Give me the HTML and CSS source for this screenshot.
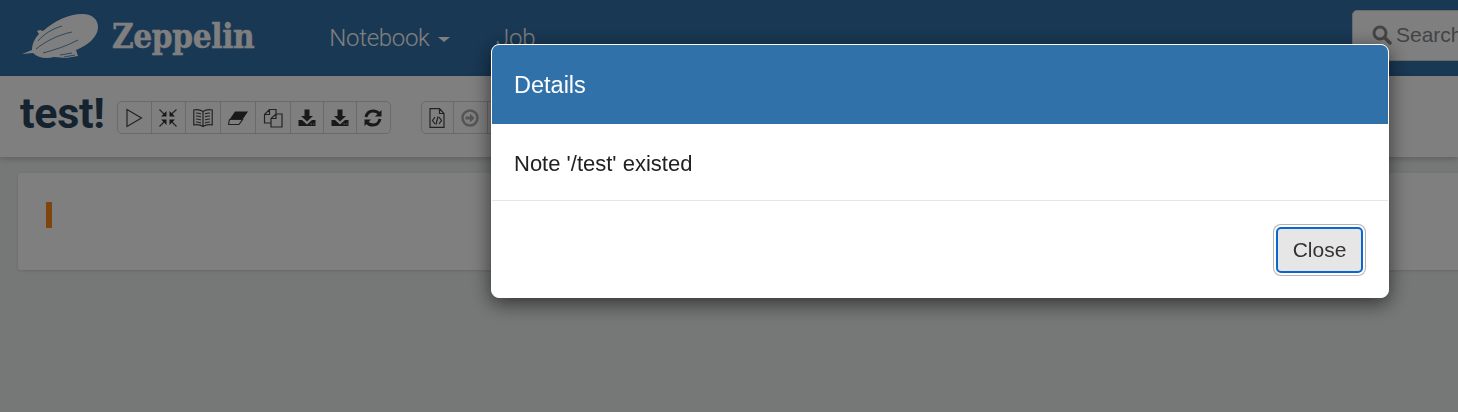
FILE: index.html
```html
<!DOCTYPE html>
<html lang="en">
<head>
  <meta charset="UTF-8">
  <title>Zeppelin</title>
  <link rel="stylesheet" href="styles.css">
</head>
<body>
  <nav class="navbar">
    <a class="brand">
      <svg class="brand-logo" viewBox="0 0 78 48" width="78" height="48">
        <path class="blimp" d="M0 42 L10 38 C10 32 13 26 17 22 L15 19 L18 18 L21 19 C32 9 47 2 60 2 C71 2 76 8 76 15 C76 25 66 33 54 38 L56 44 L44 46 L32 45 C24 47 16 46 11 41 Z"/>
        <path class="blimp-line" d="M16 29 C22 22 30 17 40 14 M14 37 C24 29 36 23 50 20 M21 41 C32 38 45 34 56 28"/>
        <path class="blimp-line" d="M38 43 L50 41 M42 45 L53 43"/>
      </svg>
      <span class="brand-name">Zeppelin</span>
    </a>
    <ul class="nav-links">
      <li>Notebook <span class="caret"></span></li>
      <li class="job">Job</li>
    </ul>
    <div class="search">
      <svg viewBox="0 0 20 20" width="20" height="20">
        <circle cx="8" cy="8" r="6" fill="none" stroke="#8a8a8a" stroke-width="3"/>
        <path d="M12.5 12.5 L18 18" stroke="#8a8a8a" stroke-width="3.5" stroke-linecap="round"/>
      </svg>
      <span>Search</span>
    </div>
  </nav>

  <header class="note-bar">
    <h1 class="note-title">test!</h1>
    <div class="btn-group">
      <button class="tool"><svg viewBox="0 0 20 20"><path class="line" d="M3 1.500 L17.500 10 L3 18.500 Z"/></svg></button>
      <button class="tool w34"><svg viewBox="0 0 20 20"><path class="line" d="M1.500 1.500 L7 7 M12.500 7 L18.500 1.500 M1.500 18.500 L7 13 M18.500 18.500 L13 13"/><path class="solid" d="M8.500 8.500 H3 L8.500 3 Z M11.500 8.500 H17 L11.500 3 Z M8.500 11.500 H3 L8.500 17 Z M11.500 11.500 H17 L11.500 17 Z"/></svg></button>
      <button class="tool"><svg viewBox="0 0 20 20"><path class="line" d="M.8 2 C4 1.200 7.500 1.800 10 3.500 C12.500 1.800 16 1.200 19.200 2 V17 C16 16.200 12.500 16.800 10 18.500 C7.500 16.800 4 16.200 .8 17 Z M10 3.500 V18.500 M3 5 C5 5 7 5.500 8 6 M3 8 C5 8 7 8.500 8 9 M3 11 C5 11 7 11.500 8 12 M3 14 C5 14 7 14.500 8 15 M17 5 C15 5 13 5.500 12 6 M17 8 C15 8 13 8.500 12 9 M17 11 C15 11 13 11.500 12 12 M17 14 C15 14 13 14.500 12 15"/></svg></button>
      <button class="tool"><svg viewBox="0 0 20 20"><path class="solid" d="M7 3.500 H20 L14.500 11.500 H1.500 Z"/><path class="line" d="M1.500 11.500 H14.500 L11 16.500 H.5 Z"/></svg></button>
      <button class="tool"><svg viewBox="0 0 20 20"><path class="line" d="M6.500 1.500 H13 V6 M6.500 1.500 L1.500 6.500 V15 H8 M6.500 1.500 V6.500 H1.500 M13 6 H19 V19 H8 V10.500 Z M13 6 V10.500 H8"/></svg></button>
      <button class="tool w33"><svg viewBox="0 0 20 20"><path class="solid" d="M7.500 1.500 H12.500 V8 H16 L10 13.500 L4 8 H7.500 Z M1.500 12 H5 L10 16.500 L15 12 H18.500 V18 H1.500 Z"/><path class="dots" d="M13.500 15.500 H15 V16.500 H13.500 Z M16 15.500 H17.500 V16.500 H16 Z"/></svg></button>
      <button class="tool w33"><svg viewBox="0 0 20 20"><path class="solid" d="M7.500 1.500 H12.500 V8 H16 L10 13.500 L4 8 H7.500 Z M1.500 12 H5 L10 16.500 L15 12 H18.500 V18 H1.500 Z"/><path class="dots" d="M13.500 15.500 H15 V16.500 H13.500 Z M16 15.500 H17.500 V16.500 H16 Z"/></svg></button>
      <button class="tool w33"><svg viewBox="0 0 20 20"><path class="sync" d="M3 9 C4 5 7 3 10 3 C13 3 15 4 16.500 6 M17 11 C16 15 13 17 10 17 C7 17 5 16 3.500 14"/><path class="solid" d="M18.500 2 V8.500 H12 Z M1.500 18 V11.500 H8 Z"/></svg></button>
    </div>
    <div class="btn-group second">
      <button class="tool w32"><svg viewBox="0 0 20 20"><path class="line" d="M3 .7 H12.500 L17 5.500 V19.300 H3 Z M12.500 .7 V5.500 H17 M8 9 L5.500 12.500 L8 16 M12 9 L14.500 12.500 L12 16 M11 8.500 L9 16.500"/></svg></button>
      <button class="tool w34"><svg viewBox="0 0 20 20"><circle class="thick" cx="10" cy="10" r="7.500"/><path class="arrow" d="M5.500 8.500 H10 V5.500 L14.500 10 L10 14.500 V11.500 H5.500 Z"/></svg></button>
      <button class="tool"></button>
    </div>
  </header>

  <main class="content">
    <section class="paragraph">
      <span class="cursor"></span>
    </section>
  </main>

  <div class="backdrop"></div>

  <div class="modal">
    <div class="modal-header">Details</div>
    <div class="modal-body">Note '/test' existed</div>
    <div class="modal-footer">
      <button class="btn-close">Close</button>
    </div>
  </div>
</body>
</html>
```

FILE: styles.css
```css
html, body {
  height: 100%;
  overflow: hidden;
}

body {
  margin: 0;
  background: #ecf0ee;
  font-family: "Liberation Sans", Arial, sans-serif;
}

.navbar {
  display: flex;
  align-items: flex-start;
  height: 76px;
  background: #3371a9;
  color: #fff;
}

.brand {
  display: flex;
  align-items: center;
  margin: 12px 0 0 22px;
}

.brand-logo {
  display: block;
}

.blimp {
  fill: #fff;
}

.blimp-line {
  fill: none;
  stroke: #3371a9;
  stroke-width: .8;
}

.brand-name {
  margin: 1px 0 0 12px;
  font-family: "DejaVu Serif Condensed", "DejaVu Serif", serif;
  font-size: 33px;
  font-weight: 700;
  letter-spacing: -.35px;
  -webkit-text-stroke: .4px #fff;
}

.nav-links {
  display: flex;
  gap: 46px;
  margin: 23px 0 0 75px;
  padding: 0;
  list-style: none;
  font-family: Roboto, sans-serif;
  font-size: 24px;
  font-weight: 300;
  letter-spacing: -.3px;
  line-height: 30px;
}

.caret {
  display: inline-block;
  width: 0;
  height: 0;
  margin-left: 3px;
  vertical-align: middle;
  border-top: 5px solid #fff;
  border-left: 6px solid transparent;
  border-right: 6px solid transparent;
}

.search {
  display: flex;
  align-items: center;
  gap: 4px;
  flex: none;
  box-sizing: border-box;
  width: 200px;
  height: 51px;
  margin: 10px -94px 0 auto;
  padding: 0 0 2px 19px;
  background: #fff;
  border: 1px solid #d6d6d6;
  border-radius: 5px;
  color: #888;
  font-size: 21px;
}

.note-bar {
  display: flex;
  align-items: flex-start;
  box-sizing: border-box;
  height: 81px;
  padding: 25px 0 0 20px;
  background: #fff;
  box-shadow: 0 2px 6px rgba(0, 0, 0, .2);
  position: relative;
}

.note-title {
  margin: -10px 12px 0 0;
  color: #2b4560;
  font-family: Roboto, sans-serif;
  font-size: 43px;
  font-weight: 700;
  line-height: 44px;
  letter-spacing: -.3px;
}

.btn-group {
  display: flex;
  box-sizing: border-box;
  height: 33px;
  border: 1px solid #d4d4d4;
  border-radius: 5px;
}

.btn-group.second {
  margin-left: 30px;
}

.tool {
  display: flex;
  align-items: center;
  justify-content: center;
  box-sizing: border-box;
  width: 35px;
  height: 100%;
  padding: 0;
  background: none;
  border: 0;
  border-right: 1px solid #d4d4d4;
}

.tool:first-child {
  width: 34px;
}

.tool:last-child {
  border-right: 0;
}

.tool.w32 {
  width: 32px;
}

.tool.w33 {
  width: 33px;
}

.tool.w34 {
  width: 34px;
}

.tool svg {
  width: 20px;
  height: 20px;
}

.line {
  fill: none;
  stroke: #444;
  stroke-width: 1.200;
}

.solid {
  fill: #333;
}

.dots {
  fill: #ccc;
}

.sync {
  fill: none;
  stroke: #333;
  stroke-width: 3;
}

.thick {
  fill: none;
  stroke: #aaa;
  stroke-width: 2.500;
}

.arrow {
  fill: #aaa;
}

.content {
  padding: 16px 0 0 18px;
}

.paragraph {
  display: block;
  box-sizing: border-box;
  width: 1470px;
  height: 97px;
  padding: 29px 0 0 28px;
  background: #fff;
  border-radius: 3px;
  box-shadow: 0 1px 3px rgba(0, 0, 0, .12);
}

.cursor {
  display: block;
  width: 6px;
  height: 26px;
  background: #ff8a1e;
}

.backdrop {
  position: fixed;
  inset: 0;
  background: rgba(0, 0, 0, .5);
}

/* dialog sits over everything */
.modal {
  position: fixed;
  top: 44px;
  left: 491px;
  box-sizing: border-box;
  width: 898px;
  background: #fff;
  border: 1px solid #fff;
  border-radius: 8px;
  box-shadow: 0 5px 20px rgba(0, 0, 0, .6);
}

.modal-header {
  box-sizing: border-box;
  height: 79px;
  padding: 0 22px;
  background: #3071a9;
  border-radius: 7px 7px 0 0;
  color: #fff;
  font-size: 23.500px;
  line-height: 80px;
}

.modal-body {
  box-sizing: border-box;
  height: 77px;
  padding: 0 22px;
  border-bottom: 1px solid #e5e5e5;
  color: #222;
  font-size: 22px;
  line-height: 79px;
}

.modal-footer {
  display: flex;
  justify-content: flex-end;
  padding: 26px 25px 24px;
}

.btn-close {
  box-sizing: border-box;
  width: 87px;
  height: 46px;
  padding: 0;
  background: #e6e6e6;
  border: 2px solid #0a66d0;
  border-radius: 5px;
  box-shadow: 0 0 0 2px #fff, 0 0 0 3px #b3b3b3;
  color: #333;
  font-family: inherit;
  font-size: 21px;
}
```
